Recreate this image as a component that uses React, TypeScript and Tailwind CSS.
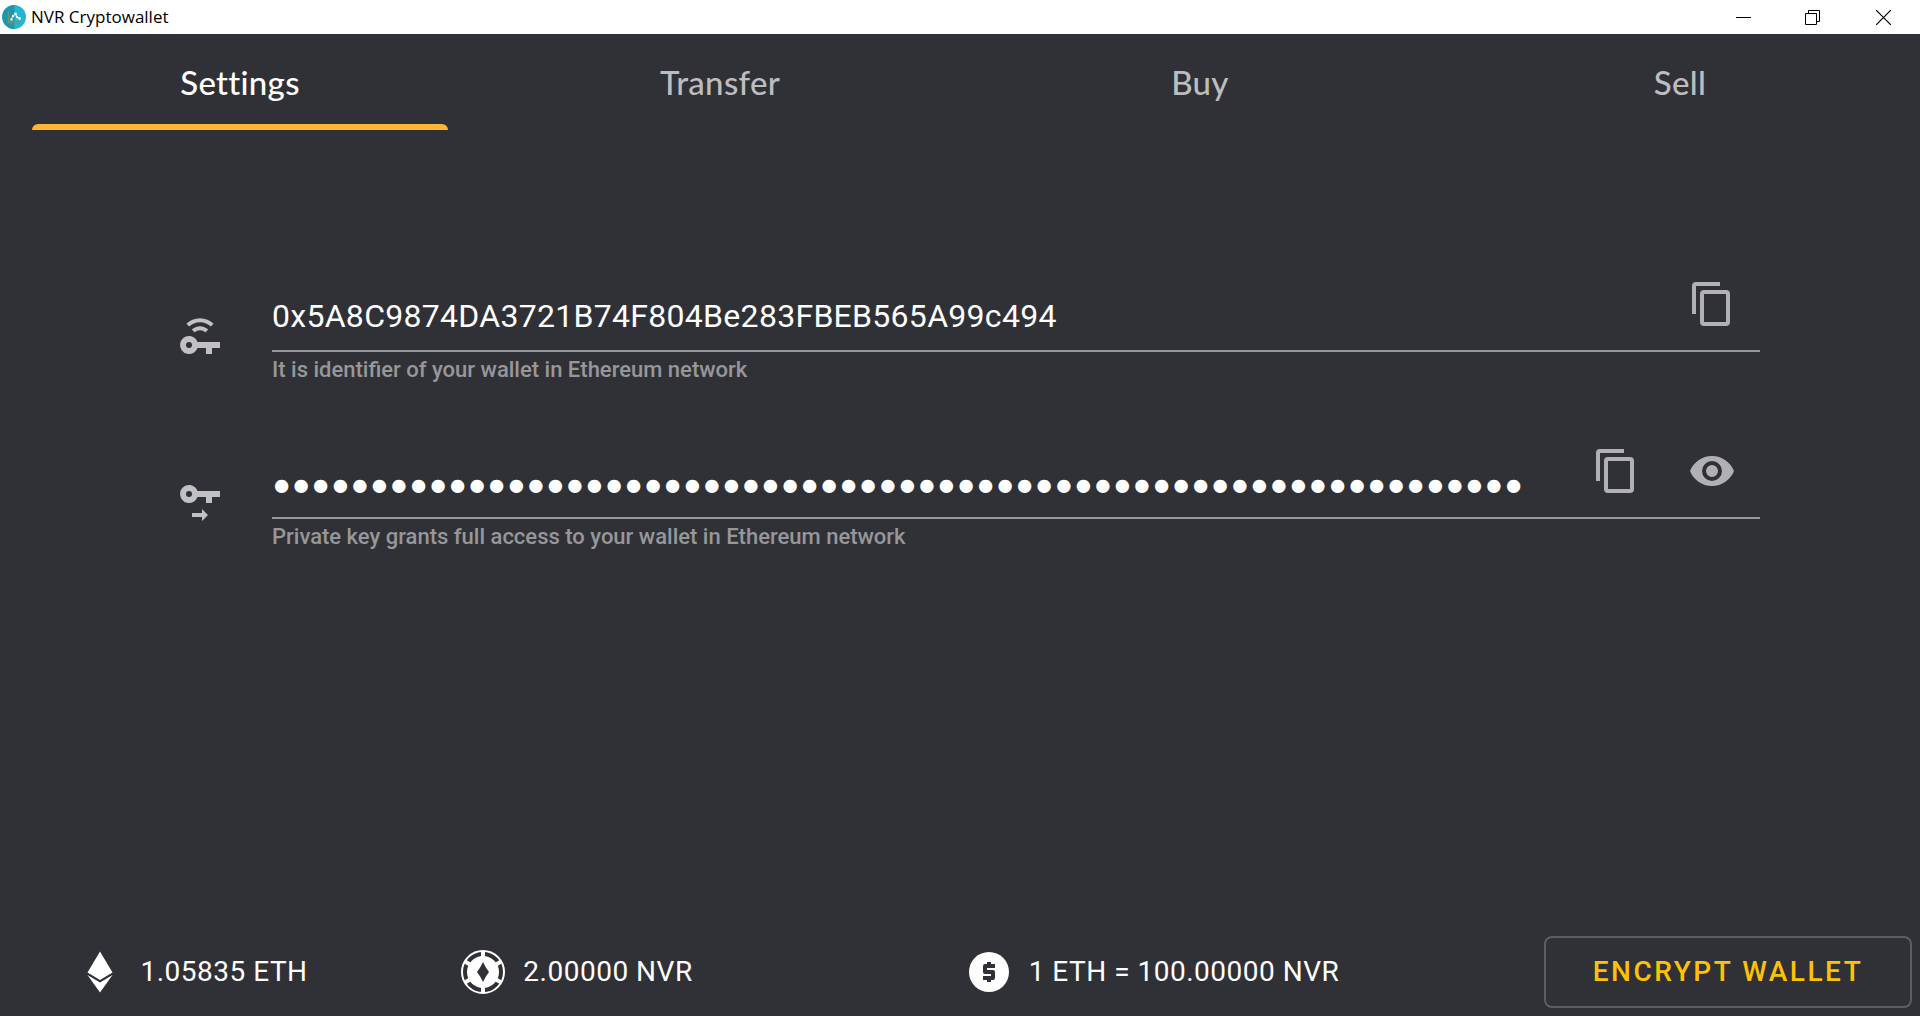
import React from "react";

const PUBLIC_KEY = "0x5A8C9874DA3721B74F804Be283FBEB565A99c494";
const PRIVATE_KEY = "0".repeat(64);
const TABS = ["Settings", "Transfer", "Buy", "Sell"];

type IconProps = { className?: string };

function AppLogo() {
  return (
    <svg viewBox="0 0 24 24" className="size-6" aria-hidden="true">
      <circle cx="12" cy="12" r="12" fill="#24b5d3" />
      <path d="M12.500 0A12 12 0 0 0 12.500 24Z" fill="#2095ab" />
      <path d="M6.500 6v11.500H18" fill="none" stroke="#6a9a72" strokeWidth="1.500" />
      <path d="M9.500 14l1.500-3 2.500-2 2 3.500 2 1" fill="none" stroke="#c4edf4" strokeWidth="1" />
      <g fill="#f4fbfc">
        <circle cx="9.500" cy="14.500" r="1.300" />
        <circle cx="11" cy="11" r="1.200" />
        <circle cx="13.500" cy="9" r="1.400" />
        <circle cx="15" cy="12" r="1.200" />
        <circle cx="17.500" cy="13.500" r="1.400" />
      </g>
    </svg>
  );
}

function KeyWirelessIcon({ className }: IconProps) {
  return (
    <svg viewBox="0 0 24 24" fill="currentColor" className={className} aria-hidden="true">
      <path fillRule="evenodd" d="M6.500 12C8.460 12 10.130 13.250 10.750 15H22V18H18V21H15V18H10.750A4.500 4.500 0 1 1 6.500 12M6.500 15A1.500 1.500 0 1 0 6.500 18A1.500 1.500 0 1 0 6.500 15Z" />
      <path d="M12 3.100C14.700 3.100 17.100 4.200 18.800 5.900L17.400 7.300C16 5.900 14.100 5.100 12 5.100C9.900 5.100 8 5.900 6.600 7.300L5.200 5.900C6.900 4.200 9.300 3.100 12 3.100Z" />
      <path d="M12 7.100C13.600 7.100 15 7.800 16.100 8.800L14.700 10.200C14 9.500 13 9.100 12 9.100C11 9.100 10 9.500 9.300 10.200L7.900 8.800C9 7.800 10.400 7.100 12 7.100Z" />
    </svg>
  );
}

function KeyArrowIcon({ className }: IconProps) {
  return (
    <svg viewBox="0 0 24 24" fill="currentColor" className={className} aria-hidden="true">
      <path fillRule="evenodd" d="M6.500 3C8.460 3 10.130 4.250 10.750 6H22V9H18V12H15V9H10.750A4.500 4.500 0 1 1 6.500 3M6.500 6A1.500 1.500 0 1 0 6.500 9A1.500 1.500 0 1 0 6.500 6Z" />
      <path d="M8 17H13V15L16 18L13 21V19H8Z" />
    </svg>
  );
}

function CopyIcon({ className }: IconProps) {
  return (
    <svg viewBox="0 0 24 24" fill="currentColor" className={className} aria-hidden="true">
      <path d="M19 21H8V7H19M19 5H8A2 2 0 0 0 6 7V21A2 2 0 0 0 8 23H19A2 2 0 0 0 21 21V7A2 2 0 0 0 19 5M16 1H4A2 2 0 0 0 2 3V17H4V3H16V1Z" />
    </svg>
  );
}

function EyeIcon({ className }: IconProps) {
  return (
    <svg viewBox="0 0 24 24" fill="currentColor" className={className} aria-hidden="true">
      <path d="M12 9A3 3 0 0 0 9 12A3 3 0 0 0 12 15A3 3 0 0 0 15 12A3 3 0 0 0 12 9M12 17A5 5 0 0 1 7 12A5 5 0 0 1 12 7A5 5 0 0 1 17 12A5 5 0 0 1 12 17M12 4.500C7 4.500 2.730 7.610 1 12C2.730 16.390 7 19.500 12 19.500C17 19.500 21.270 16.390 23 12C21.270 7.610 17 4.500 12 4.500Z" />
    </svg>
  );
}

function EthereumIcon() {
  return (
    <svg viewBox="0 0 24 24" fill="currentColor" className="size-12" aria-hidden="true">
      <path d="M12 1.750L5.750 12.250L12 16L18.250 12.250L12 1.750M5.750 13.500L12 22.250L18.250 13.500L12 17.250L5.750 13.500Z" />
    </svg>
  );
}

function PokerChipIcon() {
  const segments = [0, 60, 120, 180, 240, 300];
  return (
    <svg viewBox="0 0 48 48" className="size-12" aria-hidden="true">
      <circle cx="24" cy="24" r="21" fill="none" stroke="white" strokeWidth="2" />
      <circle cx="24" cy="24" r="16" fill="white" />
      {segments.map((angle) => (
        <path key={angle} d="M24 3V10" stroke="white" strokeWidth="4" transform={`rotate(${angle} 24 24)`} />
      ))}
      <path d="M24 14Q26.500 19.500 30 24Q26.500 28.500 24 34Q21.500 28.500 18 24Q21.500 19.500 24 14Z" fill="#303136" />
    </svg>
  );
}

function DollarIcon() {
  return (
    <svg viewBox="0 0 24 24" className="size-12" aria-hidden="true">
      <circle cx="12" cy="12" r="10" fill="white" />
      <path d="M11 17V16H9V14H13V13H10A1 1 0 0 1 9 12V9A1 1 0 0 1 10 8H11V7H13V8H15V10H11V11H14A1 1 0 0 1 15 12V15A1 1 0 0 1 14 16H13V17H11Z" fill="#303136" />
    </svg>
  );
}

function TitleBar() {
  return (
    <header className="flex h-[34px] items-center justify-between bg-white pl-[2px] text-black">
      <div className="flex items-center gap-[5px]">
        <AppLogo />
        <h1 className="font-['Open_Sans',sans-serif] text-[17px] leading-6">NVR Cryptowallet</h1>
      </div>
      <div className="flex h-full">
        <button aria-label="Minimize" className="flex w-[69px] items-center justify-center">
          <svg viewBox="0 0 15 15" className="size-[15px]"><path d="M0 7h15v1H0z" /></svg>
        </button>
        <button aria-label="Restore" className="flex w-[69px] items-center justify-center">
          <svg viewBox="0 0 15 15" className="size-[15px]" fill="none" stroke="black">
            <path d="M.5 3.500h11v11H.5zM3.500 3.500v-3h11v11h-3" />
          </svg>
        </button>
        <button aria-label="Close" className="flex w-[73px] items-center justify-center">
          <svg viewBox="0 0 15 15" className="size-[15px]" fill="none" stroke="black" strokeWidth="1.200">
            <path d="M0 0l15 15M15 0L0 15" />
          </svg>
        </button>
      </div>
    </header>
  );
}

function Tabs() {
  return (
    <nav role="tablist" className="grid grid-cols-4 font-['Lato',sans-serif] text-[33px] leading-10 font-medium tracking-[0.009em]">
      {TABS.map((tab, index) => (
        <button
          key={tab}
          role="tab"
          aria-selected={index === 0}
          className="group px-8 text-center text-[#bdbdbf] aria-selected:text-white"
        >
          <span className="block pt-7 pb-[22px]">{tab}</span>
          <span className="block h-1.5 rounded-t-md group-aria-selected:bg-[#ffb434]" />
        </button>
      ))}
    </nav>
  );
}

type KeyFieldProps = {
  id: string;
  type: "text" | "password";
  label: string;
  value: string;
  hint: string;
  icon: React.ReactNode;
  children: React.ReactNode;
};

function KeyField({ id, type, label, value, hint, icon, children }: KeyFieldProps) {
  return (
    <div className="flex items-start">
      <label htmlFor={id} aria-label={label} className="mt-14 mr-12 text-[#c1c1c3]">{icon}</label>
      <div className="min-w-0 flex-1">
        <div className="flex h-24 border-b-2 border-[#97979a]">
          <input
            id={id}
            type={type}
            readOnly
            value={value}
            aria-describedby={`${id}-hint`}
            className="min-w-0 flex-1 bg-transparent pt-9 pb-2.5 text-[32px] leading-[48px] tracking-[0.009em] text-white outline-none [&[type=password]]:pt-10 [&[type=password]]:pb-1.5 [&[type=password]]:font-['DejaVu_Sans_Mono',monospace] [&[type=password]]:[-webkit-text-stroke:4px_white]"
          />
          <div className="flex text-[#b1b1b3]">{children}</div>
        </div>
        <p id={`${id}-hint`} className="pt-1 text-[22px] leading-7 font-medium text-[#97979a]">{hint}</p>
      </div>
    </div>
  );
}

function IconButton({ label, children }: { label: string; children: React.ReactNode }) {
  return (
    <button aria-label={label} className="flex size-24 items-center justify-center">{children}</button>
  );
}

export default function App() {
  return (
    <div className="flex min-h-screen flex-col bg-[#303136] font-['Roboto',sans-serif] text-white">
      <TitleBar />
      <Tabs />
      <main className="flex flex-1 flex-col gap-[39px] pt-[126px] pr-40 pl-44">
        <KeyField
          id="address"
          type="text"
          label="Wallet address"
          value={PUBLIC_KEY}
          hint="It is identifier of your wallet in Ethereum network"
          icon={<KeyWirelessIcon className="size-12" />}
        >
          <IconButton label="Copy address"><CopyIcon className="size-12" /></IconButton>
        </KeyField>
        <KeyField
          id="private-key"
          type="password"
          label="Private key"
          value={PRIVATE_KEY}
          hint="Private key grants full access to your wallet in Ethereum network"
          icon={<KeyArrowIcon className="size-12" />}
        >
          <IconButton label="Copy private key"><CopyIcon className="size-12" /></IconButton>
          <IconButton label="Show private key"><EyeIcon className="size-12" /></IconButton>
        </KeyField>
      </main>
      <footer className="grid grid-cols-5 items-center pb-2 text-[28px] leading-10 tracking-[0.018em] whitespace-nowrap">
        <div className="flex items-center justify-center gap-4"><EthereumIcon /><span>1.05835 ETH</span></div>
        <div className="flex items-center justify-center gap-4"><PokerChipIcon /><span>2.00000 NVR</span></div>
        <div className="col-span-2 flex items-center justify-center gap-4"><DollarIcon /><span>1 ETH = 100.00000 NVR</span></div>
        <button className="mx-2 h-[72px] rounded-lg border-2 border-[#5c5d61] font-medium tracking-[0.09em] text-[#ffc107]">
          ENCRYPT WALLET
        </button>
      </footer>
    </div>
  );
}
